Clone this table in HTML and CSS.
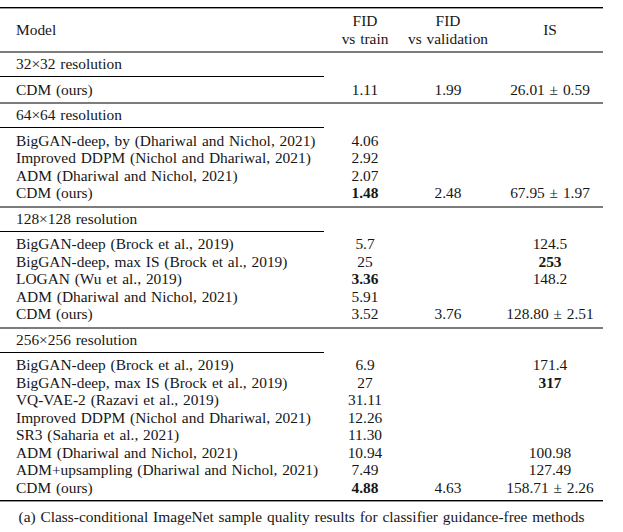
FILE: index.html
```html
<!DOCTYPE html>
<html>
<head>
<meta charset="utf-8">
<link rel="stylesheet" href="styles.css">
</head>
<body>
<div class="figure">
  <div class="table">
    <div class="rule-heavy"></div>
    <div class="row head">
      <div class="c1">Model</div>
      <div class="c2">FID<br>vs train</div>
      <div class="c3">FID<br>vs validation</div>
      <div class="c4">IS</div>
    </div>
    <div class="rule-mid"></div>

    <div class="row section"><div class="c1">32×32 resolution</div></div>
    <div class="group">
      <div class="row"><div class="c1">CDM (ours)</div><div class="c2">1.11</div><div class="c3">1.99</div><div class="c4">26.01 ± 0.59</div></div>
    </div>
    <div class="rule-mid"></div>

    <div class="row section"><div class="c1">64×64 resolution</div></div>
    <div class="group">
      <div class="row"><div class="c1">BigGAN-deep, by (Dhariwal and Nichol, 2021)</div><div class="c2">4.06</div><div class="c3"></div><div class="c4"></div></div>
      <div class="row"><div class="c1">Improved DDPM (Nichol and Dhariwal, 2021)</div><div class="c2">2.92</div><div class="c3"></div><div class="c4"></div></div>
      <div class="row"><div class="c1">ADM (Dhariwal and Nichol, 2021)</div><div class="c2">2.07</div><div class="c3"></div><div class="c4"></div></div>
      <div class="row"><div class="c1">CDM (ours)</div><div class="c2"><b>1.48</b></div><div class="c3">2.48</div><div class="c4">67.95 ± 1.97</div></div>
    </div>
    <div class="rule-mid"></div>

    <div class="row section"><div class="c1">128×128 resolution</div></div>
    <div class="group">
      <div class="row"><div class="c1">BigGAN-deep (Brock et al., 2019)</div><div class="c2">5.7</div><div class="c3"></div><div class="c4">124.5</div></div>
      <div class="row"><div class="c1">BigGAN-deep, max IS (Brock et al., 2019)</div><div class="c2">25</div><div class="c3"></div><div class="c4"><b>253</b></div></div>
      <div class="row"><div class="c1">LOGAN (Wu et al., 2019)</div><div class="c2"><b>3.36</b></div><div class="c3"></div><div class="c4">148.2</div></div>
      <div class="row"><div class="c1">ADM (Dhariwal and Nichol, 2021)</div><div class="c2">5.91</div><div class="c3"></div><div class="c4"></div></div>
      <div class="row"><div class="c1">CDM (ours)</div><div class="c2">3.52</div><div class="c3">3.76</div><div class="c4">128.80 ± 2.51</div></div>
    </div>
    <div class="rule-mid"></div>

    <div class="row section"><div class="c1">256×256 resolution</div></div>
    <div class="group">
      <div class="row"><div class="c1">BigGAN-deep (Brock et al., 2019)</div><div class="c2">6.9</div><div class="c3"></div><div class="c4">171.4</div></div>
      <div class="row"><div class="c1">BigGAN-deep, max IS (Brock et al., 2019)</div><div class="c2">27</div><div class="c3"></div><div class="c4"><b>317</b></div></div>
      <div class="row"><div class="c1">VQ-VAE-2 (Razavi et al., 2019)</div><div class="c2">31.11</div><div class="c3"></div><div class="c4"></div></div>
      <div class="row"><div class="c1">Improved DDPM (Nichol and Dhariwal, 2021)</div><div class="c2">12.26</div><div class="c3"></div><div class="c4"></div></div>
      <div class="row"><div class="c1">SR3 (Saharia et al., 2021)</div><div class="c2">11.30</div><div class="c3"></div><div class="c4"></div></div>
      <div class="row"><div class="c1">ADM (Dhariwal and Nichol, 2021)</div><div class="c2">10.94</div><div class="c3"></div><div class="c4">100.98</div></div>
      <div class="row"><div class="c1">ADM+upsampling (Dhariwal and Nichol, 2021)</div><div class="c2">7.49</div><div class="c3"></div><div class="c4">127.49</div></div>
      <div class="row"><div class="c1">CDM (ours)</div><div class="c2"><b>4.88</b></div><div class="c3">4.63</div><div class="c4">158.71 ± 2.26</div></div>
    </div>
    <div class="rule-heavy"></div>
  </div>
  <p class="caption">(a) Class-conditional ImageNet sample quality results for classifier guidance-free methods</p>
</div>
</body>
</html>
```
FILE: styles.css
```css
html, body {
  margin: 0;
  padding: 0;
  background: #ffffff;
}
body {
  font-family: "Liberation Serif", "Times New Roman", serif;
  font-size: 15.4px;
  word-spacing: 1px;
  color: #161616;
}
.figure {
  width: 603px;
  padding-top: 7px;
}
.table {
  display: flex;
  flex-direction: column;
}
.row {
  display: grid;
  grid-template-columns: 324px 82px 84px 113px;
  line-height: 17.5px;
  white-space: nowrap;
}
.c1 {
  padding-left: 16px;
}
.c2, .c3, .c4 {
  text-align: center;
}
.c4 {
  padding-left: 7px;
}
.head {
  height: 42px;
  align-items: center;
  line-height: 18px;
}
.section {
  padding-top: 2px;
}
.section .c1 {
  padding-bottom: 3.5px;
  border-bottom: 1px solid #000;
}
.group {
  padding: 3.5px 0 4px;
  display: flex;
  flex-direction: column;
}
.rule-heavy {
  height: 1px;
  background: #000;
  border-bottom: 1px solid #9a9a9a;
}
.rule-mid {
  height: 2px;
  background: #7c7c7c;
}
b {
  font-weight: bold;
}
.caption {
  margin: 6px 0 0;
  text-align: center;
  line-height: 17.5px;
}
```
